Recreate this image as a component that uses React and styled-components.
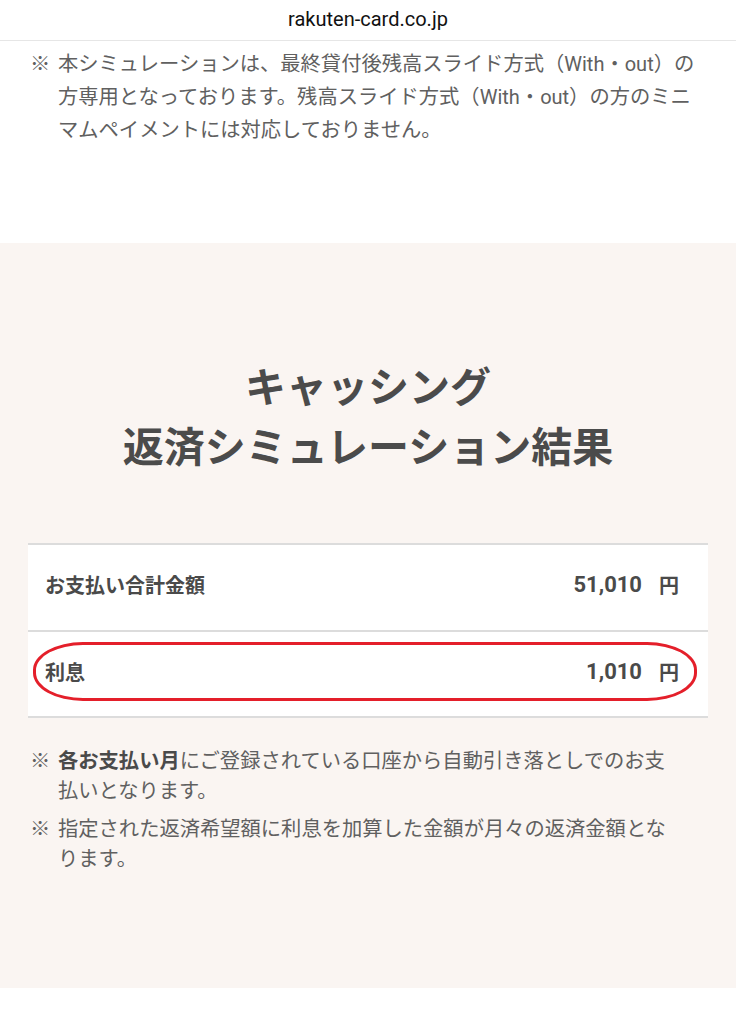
import React from "react";
import styled, { createGlobalStyle } from "styled-components";

const Global = createGlobalStyle`
  html, body { margin: 0; padding: 0; background: #ffffff; }
  body { font-family: "Noto Sans CJK JP", "Noto Sans", sans-serif; }
  * { box-sizing: border-box; }
`;

const Page = styled.div`
  width: 736px;
  min-height: 1024px;
  background: #ffffff;
  display: flex;
  flex-direction: column;
`;

const AddressBar = styled.div`
  height: 41px;
  display: flex;
  align-items: center;
  justify-content: center;
  border-bottom: 1px solid #e6e6e6;
  font-family: "Roboto", "Liberation Sans", sans-serif;
  font-size: 20px;
  color: #111;
  padding-bottom: 3px;
`;

const TopSection = styled.section`
  height: 202px;
  padding: 6px 30px 0 30px;
`;

const NoteList = styled.ul`
  list-style: none;
  margin: 0;
  padding: 0;
  display: flex;
  flex-direction: column;
  gap: ${(p) => p.$gap || 0}px;
`;

const NoteItem = styled.li`
  display: flex;
  font-size: 20.3px;
  line-height: ${(p) => p.$lh || 31}px;
  color: #606060;
`;

const Mark = styled.span`
  flex: 0 0 28px;
`;

const NoteText = styled.span`
  flex: 1;
  white-space: nowrap;
  b { font-weight: 700; color: #4a4a4a; }
`;

const Latin = styled.span`
  font-family: "Roboto", "Liberation Sans", sans-serif;
  font-size: 20px;
`;

const ResultSection = styled.section`
  background: #faf5f2;
  height: 745px;
  padding: 111px 28px 0 28px;
  display: flex;
  flex-direction: column;
`;

const Heading = styled.h2`
  margin: 0;
  text-align: center;
  font-size: 41px;
  line-height: 60px;
  font-weight: 700;
  color: #4b4b4b;
`;

const Table = styled.div`
  margin-top: 69px;
  background: #ffffff;
  border-top: 2px solid #dcdcdc;
  border-bottom: 2px solid #dcdcdc;
  display: flex;
  flex-direction: column;
`;

const Row = styled.div`
  position: relative;
  height: ${(p) => p.$h}px;
  display: flex;
  align-items: center;
  justify-content: space-between;
  padding: 0 29px 6px 17px;
  font-size: 20px;
  font-weight: 700;
  color: #4a4a4a;
  & + & { border-top: 2px solid #dcdcdc; }
`;

const Amount = styled.span`
  font-family: "Roboto", "Liberation Sans", sans-serif;
  font-size: 22px;
  font-weight: 700;
  display: flex;
  gap: 17px;
  align-items: center;
`;

const Yen = styled.span`
  font-family: "Noto Sans CJK JP", sans-serif;
  font-size: 20px;
`;

const Highlight = styled.div`
  position: absolute;
  left: 5px;
  right: 11px;
  top: 10px;
  bottom: 15px;
  border: 3px solid #e41f2a;
  border-radius: 50px / 28px;
  pointer-events: none;
`;

const BottomNotes = styled.div`
  margin-top: 26px;
  padding-left: 2px;
`;

export default function App() {
  return (
    <Page>
      <Global />
      <AddressBar>rakuten-card.co.jp</AddressBar>
      <TopSection>
        <NoteList>
          <NoteItem>
            <Mark>※</Mark>
            <NoteText>
              本シミュレーションは、最終貸付後残高スライド方式（<Latin>With</Latin>・<Latin>out</Latin>）の
              <br />
              方専用となっております。残高スライド方式（<Latin>With</Latin>・<Latin>out</Latin>）の方のミニ
              <br />
              マムペイメントには対応しておりません。
            </NoteText>
          </NoteItem>
        </NoteList>
      </TopSection>
      <ResultSection>
        <Heading>
          キャッシング
          <br />
          返済シミュレーション結果
        </Heading>
        <Table>
          <Row $h={85}>
            <span>お支払い合計金額</span>
            <Amount>
              51,010<Yen>円</Yen>
            </Amount>
          </Row>
          <Row $h={86}>
            <span>利息</span>
            <Amount>
              1,010<Yen>円</Yen>
            </Amount>
            <Highlight />
          </Row>
        </Table>
        <BottomNotes>
          <NoteList $gap={8}>
            <NoteItem $lh={30}>
              <Mark>※</Mark>
              <NoteText>
                <b>各お支払い月</b>にご登録されている口座から自動引き落としでのお支
                <br />
                払いとなります。
              </NoteText>
            </NoteItem>
            <NoteItem $lh={30}>
              <Mark>※</Mark>
              <NoteText>
                指定された返済希望額に利息を加算した金額が月々の返済金額とな
                <br />
                ります。
              </NoteText>
            </NoteItem>
          </NoteList>
        </BottomNotes>
      </ResultSection>
    </Page>
  );
}
